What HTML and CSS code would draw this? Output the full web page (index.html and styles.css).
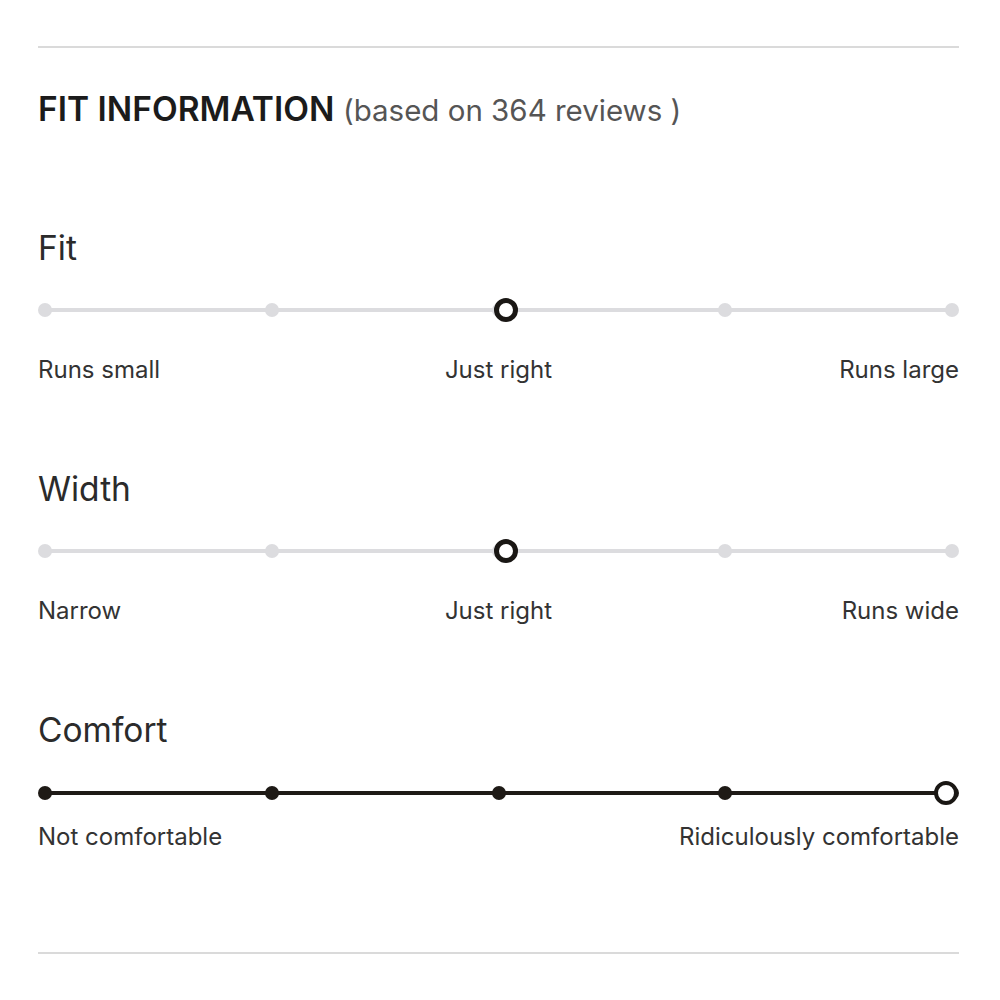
FILE: index.html
```html
<!DOCTYPE html>
<html lang="en">
<head>
    <meta charset="UTF-8">
    <meta name="viewport" content="width=device-width, initial-scale=1.0">
    <title>Fit Information</title>
    <link rel="stylesheet" href="styles.css">
</head>
<body>
    <div class="page">
        <hr class="divider">

        <h2 class="section-title">FIT INFORMATION <span class="count">(based on 364 reviews )</span></h2>

        <div class="fit-row">
            <div class="fit-name">Fit</div>
            <div class="scale">
                <span class="dot"></span>
                <span class="dot"></span>
                <span class="dot"></span>
                <span class="dot"></span>
                <span class="dot"></span>
                <span class="marker marker-mid"></span>
            </div>
            <div class="scale-labels">
                <span>Runs small</span>
                <span>Just right</span>
                <span>Runs large</span>
            </div>
        </div>

        <div class="fit-row">
            <div class="fit-name">Width</div>
            <div class="scale">
                <span class="dot"></span>
                <span class="dot"></span>
                <span class="dot"></span>
                <span class="dot"></span>
                <span class="dot"></span>
                <span class="marker marker-mid"></span>
            </div>
            <div class="scale-labels">
                <span>Narrow</span>
                <span>Just right</span>
                <span>Runs wide</span>
            </div>
        </div>

        <div class="fit-row fit-row-last">
            <div class="fit-name">Comfort</div>
            <div class="scale scale-filled">
                <span class="dot"></span>
                <span class="dot"></span>
                <span class="dot"></span>
                <span class="dot"></span>
                <span class="dot"></span>
                <span class="marker marker-end"></span>
            </div>
            <div class="scale-labels scale-labels-ends">
                <span>Not comfortable</span>
                <span>Ridiculously comfortable</span>
            </div>
        </div>

        <hr class="divider">

        <h2 class="section-title">DESCRIPTION</h2>
    </div>
</body>
</html>
```

FILE: styles.css
```css
body {
    margin: 0;
    background: #fff;
    font-family: Inter, "Noto Sans", Arial, sans-serif;
    color: #2b2b2b;
}
.page {
    padding: 46px 41px 0 38px;
}
.divider {
    border: 0;
    height: 2px;
    background: #dadada;
    margin: 0;
}
.section-title {
    margin: 41px 0 0;
    font-size: 33.5px;
    line-height: 40px;
    font-weight: 600;
    color: #1b1b1b;
}
.count {
    font-size: 29.5px;
    font-weight: 400;
    color: #555;
}
.fit-row {
    margin-top: 98px;
}
.fit-row + .fit-row {
    margin-top: 84px;
}
.fit-name {
    font-size: 33.5px;
    line-height: 40px;
    color: #2b2b2b;
}
.scale {
    position: relative;
    margin-top: 30px;
    height: 24px;
    display: flex;
    align-items: center;
    justify-content: space-between;
    background: linear-gradient(#dcdcdf, #dcdcdf) center / calc(100% - 14px) 4px no-repeat;
}
.dot {
    width: 14px;
    height: 14px;
    border-radius: 50%;
    background: #dcdcdf;
}
.scale-filled {
    margin-top: 31px;
    background-image: linear-gradient(#1e1a16, #1e1a16);
}
.scale-filled .dot {
    background: #1e1a16;
}
.marker {
    position: absolute;
    top: 0;
    width: 14px;
    height: 14px;
    border: 5px solid #1a1714;
    border-radius: 50%;
    background: #fff;
}
.marker-mid {
    left: calc(50% - 5px);
}
.marker-end {
    right: 1px;
    border-width: 4px;
    width: 16px;
    height: 16px;
}
.scale-labels {
    margin-top: 33px;
    display: grid;
    grid-template-columns: 1fr auto 1fr;
    font-size: 24px;
    line-height: 30px;
    color: #333;
}
.scale-labels span:last-child {
    text-align: right;
}
.scale-labels-ends {
    margin-top: 17px;
    grid-template-columns: 1fr 1fr;
}
.fit-row-last + .divider {
    margin-top: 100px;
}
```
